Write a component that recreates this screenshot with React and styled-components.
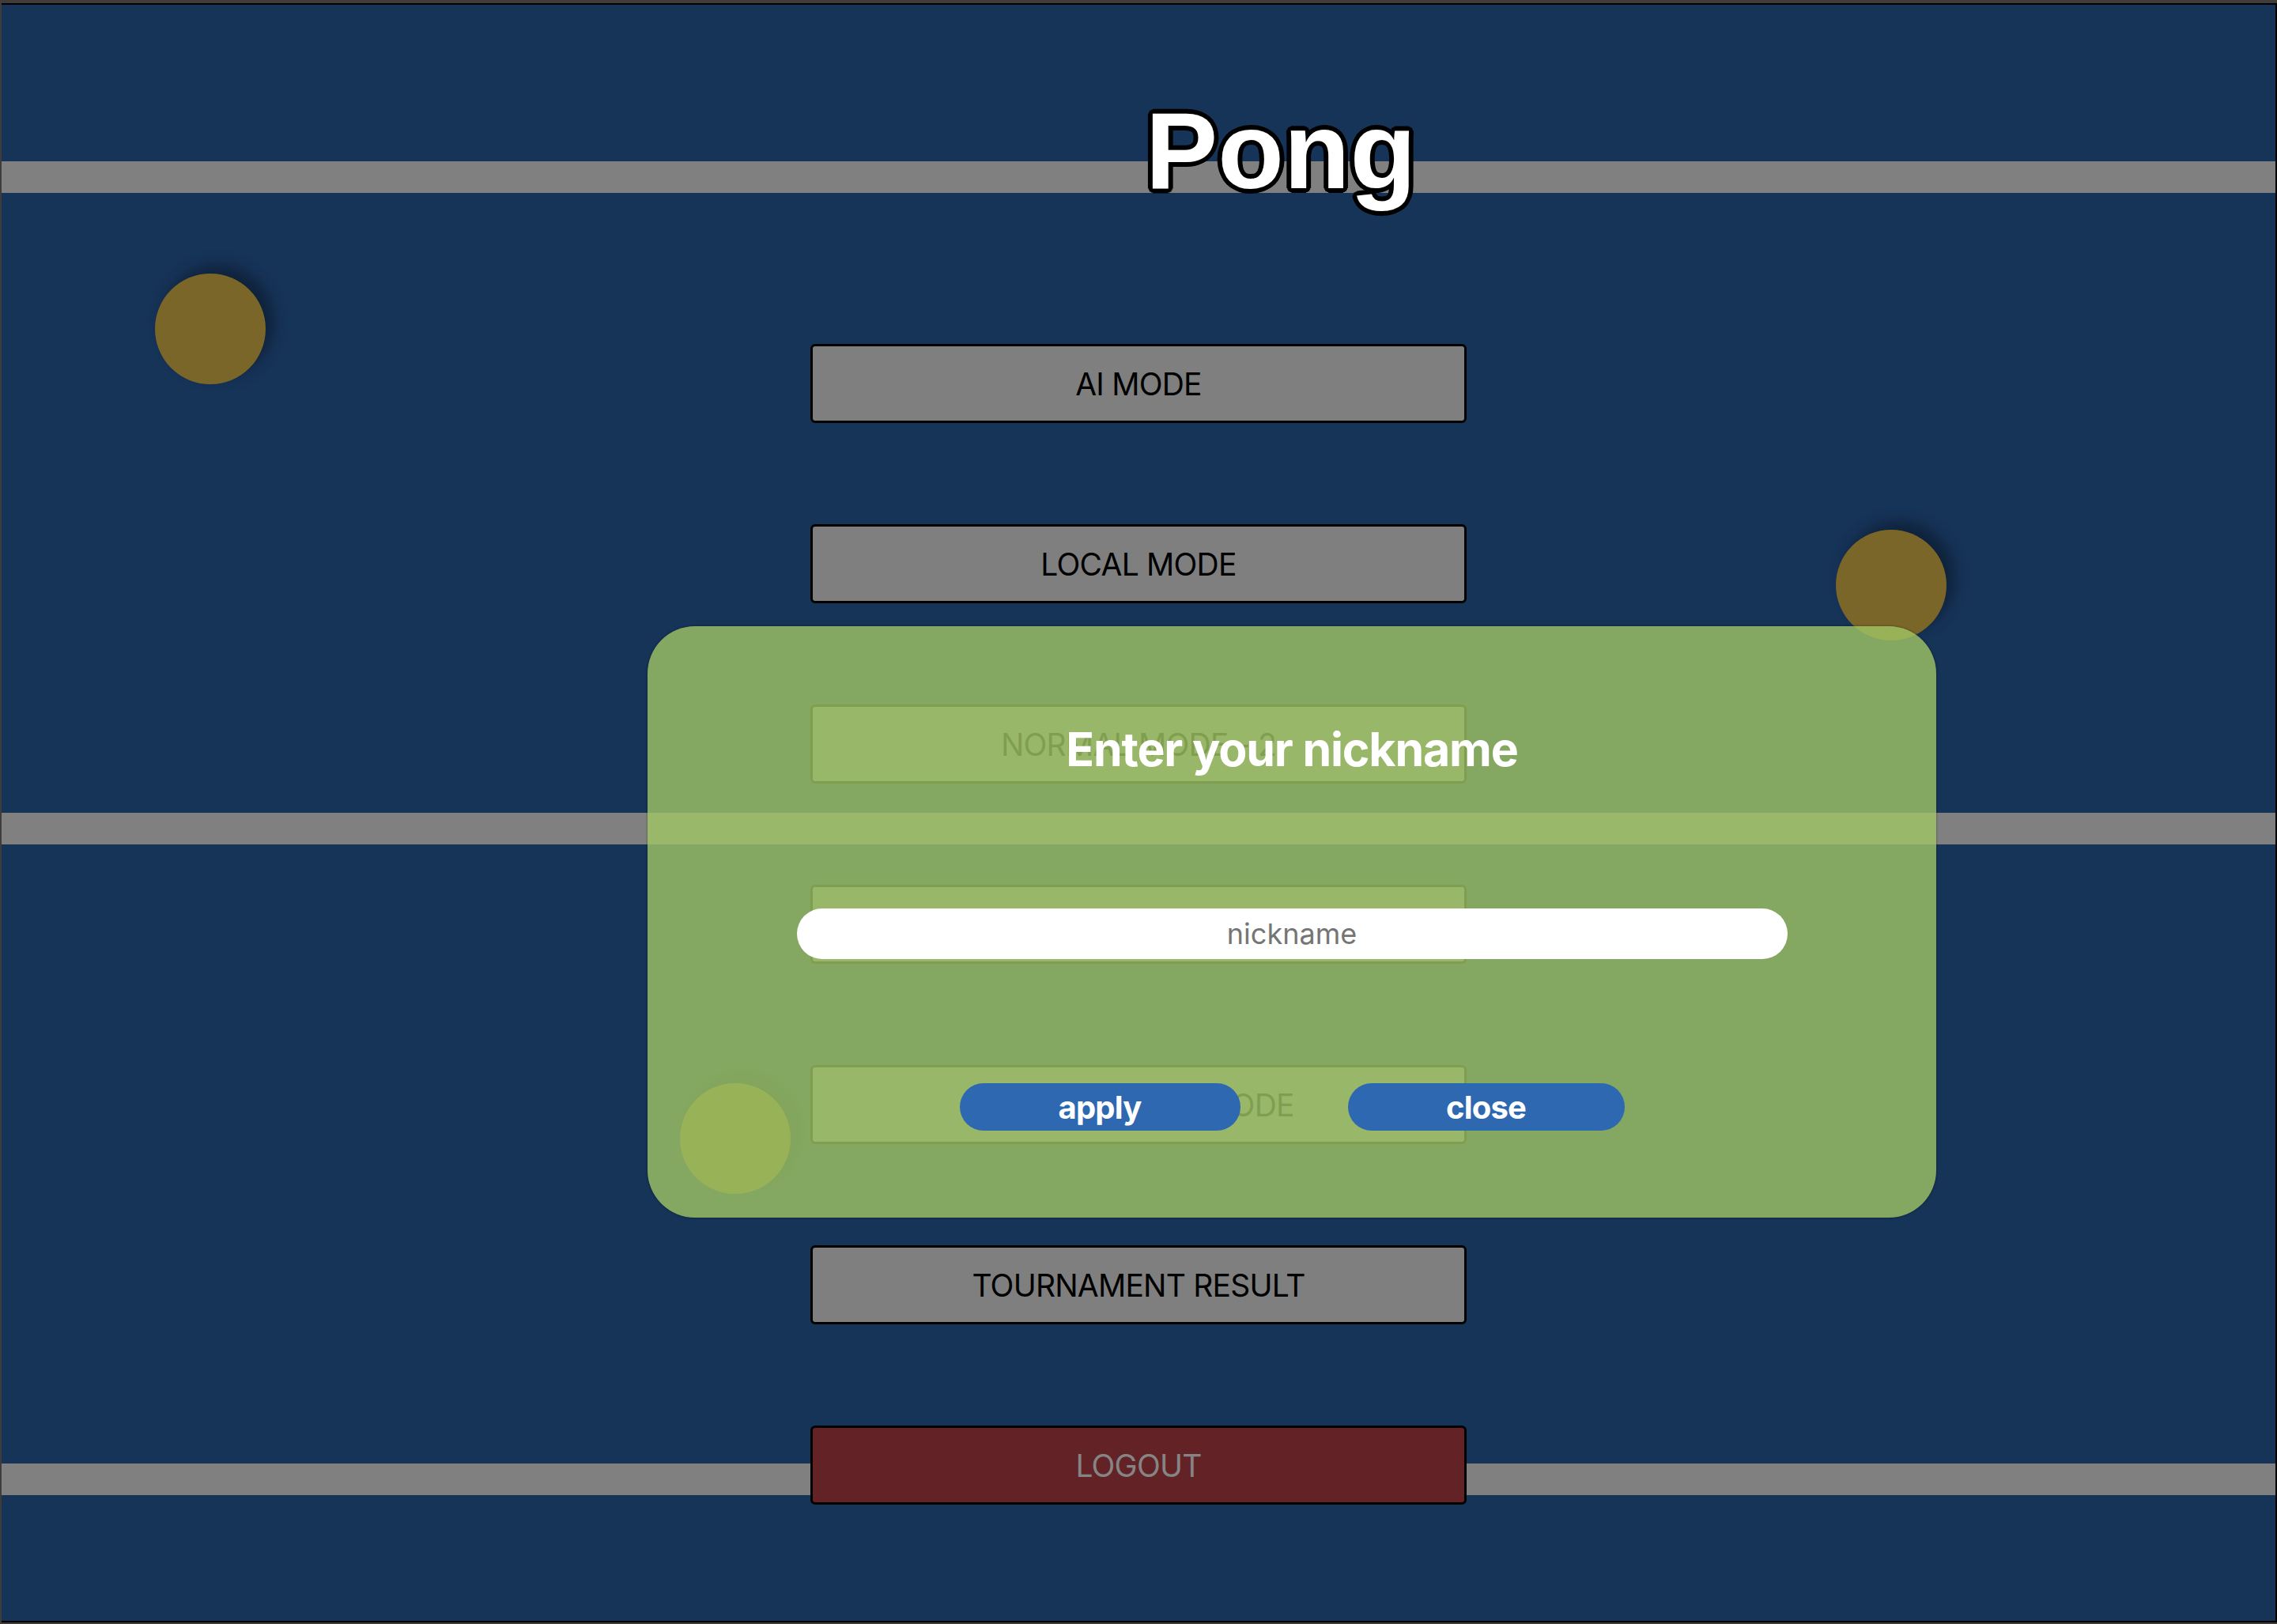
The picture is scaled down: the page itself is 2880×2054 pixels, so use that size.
import React from 'react'
import styled, {createGlobalStyle} from 'styled-components'

const GlobalStyle = createGlobalStyle`
  html, body {
    margin: 0;
    padding: 0;
    background: #3f3c39;
  }
  * {
    box-sizing: border-box;
  }
`;

const Court = styled.div`
  position: relative;
  margin: 4px 0 0 2px;
  height: 2048px;
  border-top: 2px solid #000;
  border-right: 2px solid #000;
  border-bottom: 2px solid #000;
  overflow: hidden;
  background-color: #163358;
  background-image: linear-gradient(
    to bottom,
    transparent 198px,
    #808080 198px,
    #808080 238px,
    transparent 238px,
    transparent 1022px,
    #808080 1022px,
    #808080 1062px,
    transparent 1062px,
    transparent 1845px,
    #808080 1845px,
    #808080 1885px,
    transparent 1885px
  );
  display: flex;
  flex-direction: column;
  align-items: center;
  padding-top: 115px;
  font-family: Inter, "Liberation Sans", sans-serif;
`;

const Title = styled.h1`
  margin: 0 0 0 360px;
  height: 140px;
  font-family: "Liberation Sans", Arial, sans-serif;
  font-weight: 700;
  font-size: 137px;
  line-height: 140px;
  color: #fff;
  text-shadow:
    6px 0 0 #000, -6px 0 0 #000, 0 6px 0 #000, 0 -6px 0 #000,
    4px 4px 0 #000, -4px 4px 0 #000, 4px -4px 0 #000, -4px -4px 0 #000,
    5px 2px 0 #000, -5px 2px 0 #000, 5px -2px 0 #000, -5px -2px 0 #000,
    2px 5px 0 #000, -2px 5px 0 #000, 2px -5px 0 #000, -2px -5px 0 #000;
  position: relative;
  z-index: 2;
`;

const Menu = styled.nav`
  margin-top: 174px;
  display: flex;
  flex-direction: column;
  gap: 128px;
`;

const MenuButton = styled.button`
  width: 830px;
  height: 100px;
  border: 3px solid #000;
  border-radius: 6px;
  background: ${props => (props.$danger ? '#632225' : '#7f7f7f')};
  color: ${props => (props.$danger ? '#858585' : '#000')};
  font-family: Inter, "Liberation Sans", sans-serif;
  font-size: 39px;
  letter-spacing: -0.02em;
  cursor: pointer;
`;

const Ball = styled.div`
  position: absolute;
  left: ${props => props.$x - 70}px;
  top: ${props => props.$y - 70}px;
  width: 140px;
  height: 140px;
  border-radius: 50%;
  background: #7a6628;
  box-shadow: 10px -10px 18px rgba(0, 0, 0, 0.35);
  z-index: 1;
`;

const Modal = styled.div`
  position: absolute;
  left: 817px;
  top: 786px;
  width: 1630px;
  height: 748px;
  border-radius: 60px;
  background: rgba(160, 197, 100, 0.8);
  box-shadow: 0 0 3px rgba(0, 0, 0, 0.45);
  z-index: 3;
  display: flex;
  flex-direction: column;
  align-items: center;
  padding-top: 126px;
`;

const ModalTitle = styled.h2`
  margin: 0;
  font-family: Inter, "Liberation Sans", sans-serif;
  font-weight: 700;
  font-size: 59px;
  line-height: 59px;
  letter-spacing: -0.02em;
  color: #fff;
`;

const NicknameInput = styled.input`
  margin-top: 172px;
  width: 1253px;
  height: 64px;
  border: none;
  border-radius: 32px;
  background: #fff;
  text-align: center;
  font-family: Inter, "Liberation Sans", sans-serif;
  font-size: 36px;
  color: #333;
  outline: none;
  &::placeholder {
    color: #757575;
  }
`;

const Actions = styled.div`
  margin-top: 157px;
  display: flex;
  gap: 136px;
`;

const PillButton = styled.button`
  width: ${props => props.$width}px;
  height: 60px;
  border: none;
  border-radius: 30px;
  background: #2d68b0;
  color: #fff;
  font-family: Inter, "Liberation Sans", sans-serif;
  font-weight: 700;
  font-size: 40px;
  letter-spacing: -0.02em;
  cursor: pointer;
`;

const menuItems = [
  'AI MODE',
  'LOCAL MODE',
  'NORMAL MODE - 2',
  'NORMAL MODE - 4',
  'TOURNAMENT MODE',
  'TOURNAMENT RESULT',
]

function App() {
  return (
    <>
      <GlobalStyle />
      <Court>
        <Ball $x={264} $y={410} />
        <Ball $x={2390} $y={734} />
        <Ball $x={928} $y={1434} />
        <Title>Pong</Title>
        <Menu>
          {menuItems.map(item => (
            <MenuButton key={item}>{item}</MenuButton>
          ))}
          <MenuButton $danger>LOGOUT</MenuButton>
        </Menu>
        <Modal>
          <ModalTitle>Enter your nickname</ModalTitle>
          <NicknameInput placeholder="nickname" />
          <Actions>
            <PillButton $width={355}>apply</PillButton>
            <PillButton $width={350}>close</PillButton>
          </Actions>
        </Modal>
      </Court>
    </>
  )
}

export default App
